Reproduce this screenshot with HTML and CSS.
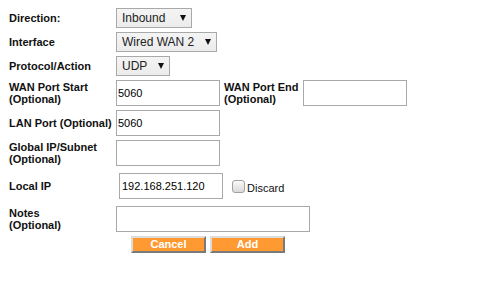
FILE: index.html
```html
<!DOCTYPE html>
<html>
<head>
<meta charset="utf-8">
<link rel="stylesheet" href="styles.css">
</head>
<body>
<form class="form">
  <div class="row">
    <label class="lbl">Direction:</label>
    <span class="sel w-dir"><select><option>Inbound</option></select></span>
  </div>
  <div class="row">
    <label class="lbl">Interface</label>
    <span class="sel w-if"><select><option>Wired WAN 2</option></select></span>
  </div>
  <div class="row">
    <label class="lbl">Protocol/Action</label>
    <span class="sel w-proto"><select><option>UDP</option></select></span>
  </div>
  <div class="row">
    <label class="lbl">WAN Port Start<br>(Optional)</label>
    <input class="txt" type="text" value="5060">
    <label class="lbl-end">WAN Port End<br>(Optional)</label>
    <input class="txt" type="text" value="">
  </div>
  <div class="row">
    <label class="lbl">LAN Port (Optional)</label>
    <input class="txt" type="text" value="5060">
  </div>
  <div class="row">
    <label class="lbl">Global IP/Subnet<br>(Optional)</label>
    <input class="txt" type="text" value="">
  </div>
  <div class="row row-spaced">
    <label class="lbl">Local IP</label>
    <input class="txt txt-ip" type="text" value="192.168.251.120">
    <label class="discard"><input class="chk" type="checkbox">Discard</label>
  </div>
  <div class="row row-spaced">
    <label class="lbl">Notes<br>(Optional)</label>
    <input class="txt txt-notes" type="text" value="">
  </div>
  <div class="row buttons">
    <button type="button" class="btn">Cancel</button>
    <button type="button" class="btn">Add</button>
  </div>
</form>
</body>
</html>
```
FILE: styles.css
```css
body {
  margin: 8px;
  font-family: "Liberation Sans", Arial, sans-serif;
  font-size: 11px;
  color: #111;
  background: #fff;
}

.form {
  display: flex;
  flex-direction: column;
  gap: 4px;
}

.row {
  display: flex;
  align-items: center;
}

.row-spaced {
  margin-top: 3px;
}

.lbl {
  flex: none;
  width: 107px;
  padding-left: 1px;
  font-weight: bold;
  line-height: 12.5px;
}

.lbl-end {
  flex: none;
  width: 79px;
  padding-left: 4px;
  font-weight: bold;
  line-height: 12.5px;
}

.sel {
  position: relative;
  display: block;
  flex: none;
}

.sel select {
  -webkit-appearance: none;
  appearance: none;
  display: block;
  width: 100%;
  height: 20px;
  margin: 0;
  padding: 0 0 0 5px;
  border: 1px solid #a9a9a9;
  border-radius: 0;
  background: linear-gradient(#f4f4f4, #ebebeb);
  font-family: "Liberation Sans", Arial, sans-serif;
  font-size: 12px;
  color: #222;
}

.sel::after {
  content: "";
  position: absolute;
  right: 6px;
  top: 7px;
  border-left: 3.5px solid transparent;
  border-right: 3.5px solid transparent;
  border-top: 6px solid #111;
  pointer-events: none;
}

.w-dir { width: 76px; }
.w-if { width: 101px; }
.w-proto { width: 54px; }

.txt {
  flex: none;
  box-sizing: border-box;
  width: 104px;
  height: 26px;
  margin: 0;
  padding: 0 1px;
  border: 1px solid #a9a9a9;
  border-radius: 0;
  background: #fff;
  font-family: "Liberation Sans", Arial, sans-serif;
  font-size: 11px;
  color: #000;
  outline: none;
}

.txt-ip {
  margin-left: 3px;
  padding-left: 2px;
}

.txt-notes {
  width: 194px;
}

.discard {
  display: flex;
  align-items: center;
  margin-left: 9px;
  padding-top: 3px;
  color: #111;
}

.chk {
  -webkit-appearance: none;
  appearance: none;
  box-sizing: border-box;
  width: 13px;
  height: 13px;
  margin: -3px 2px 0 0;
  border: 1px solid #a0a0a0;
  border-radius: 3px;
  background: linear-gradient(#fafafa, #d9d9d9);
}

.buttons {
  padding-left: 123px;
  gap: 4px;
  margin-top: 0;
}

.btn {
  box-sizing: border-box;
  width: 75px;
  height: 17px;
  margin: 0;
  padding: 0;
  border: 2px solid;
  border-color: #dcdcdc #7a7a7a #7a7a7a #dcdcdc;
  border-radius: 0;
  background: #ff9a33;
  color: #fff;
  font-family: "Liberation Sans", Arial, sans-serif;
  font-size: 11px;
  font-weight: bold;
  line-height: 13px;
}
```
